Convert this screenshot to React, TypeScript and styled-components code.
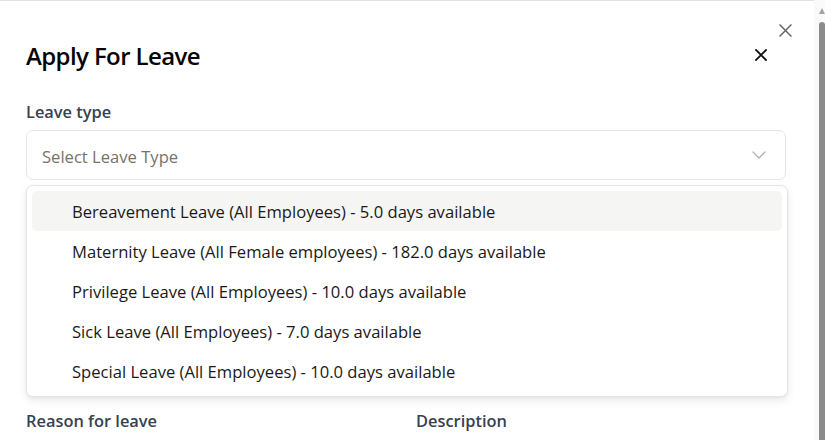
import { ReactElement } from "react";
import styled, { createGlobalStyle } from "styled-components";

const GlobalStyle = createGlobalStyle`
    html, body {
        margin: 0;
        padding: 0;
        background: #ffffff;
        overflow: hidden;
    }
    body {
        font-family: "Open Sans", "Noto Sans", Arial, sans-serif;
        -webkit-font-smoothing: antialiased;
    }
`;

const Screen = styled.div`
    display: flex;
    height: 440px;
    width: 825px;
    overflow: hidden;
`;

const Panel = styled.div`
    position: relative;
    flex: 1;
    border-top: 1px solid #e2e2e2;
    padding: 0 28px 0 26px;
    box-sizing: border-box;
    background: #ffffff;
`;

const ScrollRail = styled.div`
    width: 11px;
    display: flex;
    flex-direction: column;
    align-items: flex-end;
    background: #fafafa;
    padding-top: 8px;
    box-sizing: border-box;
`;

const RailArrow = styled.div`
    width: 0;
    height: 0;
    border-left: 3px solid transparent;
    border-right: 3px solid transparent;
    border-bottom: 6px solid #a3a3a3;
`;

const RailThumb = styled.div`
    margin-top: 8px;
    width: 6px;
    flex: 1;
    background: #8b8b8b;
    border-radius: 3px 3px 0 0;
`;

const OuterClose = styled.button`
    position: absolute;
    top: 22px;
    right: 22px;
    width: 14px;
    height: 14px;
    padding: 0;
    border: none;
    background: none;
    color: #666666;
    display: flex;
    align-items: center;
    justify-content: center;
`;

const Header = styled.div`
    display: flex;
    align-items: center;
    justify-content: space-between;
    padding-top: 37px;
    height: 34px;
    padding-right: 18px;
`;

const Title = styled.h2`
    margin: 0;
    font-size: 24px;
    font-weight: 600;
    color: #050505;
    letter-spacing: -0.6px;
`;

const CloseButton = styled.button`
    width: 14px;
    height: 14px;
    padding: 0;
    border: none;
    background: none;
    color: #111111;
    display: flex;
    align-items: center;
    justify-content: center;
`;

const Form = styled.div`
    display: flex;
    flex-direction: column;
    gap: 23px;
    margin-top: 28px;
`;

const Field = styled.div<{ $gap?: number }>`
    position: relative;
    display: flex;
    flex-direction: column;
    gap: ${(p) => p.$gap ?? 6}px;
`;

const Row = styled.div`
    display: grid;
    grid-template-columns: 1fr 1fr;
    gap: 20px;
`;

const Label = styled.label`
    font-size: 16.4px;
    line-height: 24px;
    font-weight: 600;
    color: #374151;
`;

const SelectBox = styled.div`
    height: 50px;
    box-sizing: border-box;
    border: 1px solid #e7e5e4;
    border-radius: 7px;
    display: flex;
    align-items: center;
    justify-content: space-between;
    padding: 0 19px 0 15px;
    background: #ffffff;
`;

const Placeholder = styled.span`
    font-size: 16.6px;
    color: #78716c;
    margin-top: 3px;
`;

const Input = styled.div<{ $height?: number }>`
    height: ${(p) => p.$height ?? 50}px;
    box-sizing: border-box;
    border: 1px solid #e7e5e4;
    border-radius: 7px;
`;

const Menu = styled.div`
    position: absolute;
    top: 85px;
    left: 0;
    right: -2px;
    background: #ffffff;
    border: 1px solid #e7e5e4;
    border-radius: 7px;
    padding: 5px;
    box-shadow: 0 4px 8px rgba(0, 0, 0, 0.08), 0 1px 3px rgba(0, 0, 0, 0.05);
    z-index: 5;
`;

const Option = styled.div<{ $active?: boolean }>`
    height: 40px;
    display: flex;
    align-items: center;
    padding-left: 40px;
    padding-top: 1px;
    box-sizing: border-box;
    border-radius: 5px;
    font-size: 16.6px;
    color: #1c1917;
    background: ${(p) => (p.$active ? "#f5f5f4" : "transparent")};
`;

const XIcon = ({ size, stroke }: { size: number; stroke: number }): ReactElement => (
    <svg width={size} height={size} viewBox="0 0 12 12" fill="none">
        <path d="M1 1L11 11M11 1L1 11" stroke="currentColor" strokeWidth={stroke} strokeLinecap="square" />
    </svg>
);

const Chevron = (): ReactElement => (
    <svg width="14" height="8" viewBox="0 0 14 8" fill="none">
        <path d="M1 1L7 7L13 1" stroke="#b5b3b1" strokeWidth="1.3" strokeLinecap="round" strokeLinejoin="round" />
    </svg>
);

const leaveTypes = [
    "Bereavement Leave (All Employees) - 5.0 days available",
    "Maternity Leave (All Female employees) - 182.0 days available",
    "Privilege Leave (All Employees) - 10.0 days available",
    "Sick Leave (All Employees) - 7.0 days available",
    "Special Leave (All Employees) - 10.0 days available",
];

const App = (): ReactElement => {
    return (
        <>
            <GlobalStyle />
            <Screen>
                <Panel>
                    <OuterClose aria-label="Close dialog">
                        <XIcon size={13} stroke={1.4} />
                    </OuterClose>
                    <Header>
                        <Title>Apply For Leave</Title>
                        <CloseButton aria-label="Close">
                            <XIcon size={12} stroke={1.8} />
                        </CloseButton>
                    </Header>
                    <Form>
                        <Field>
                            <Label>Leave type</Label>
                            <SelectBox>
                                <Placeholder>Select Leave Type</Placeholder>
                                <Chevron />
                            </SelectBox>
                            <Menu>
                                {leaveTypes.map((type, i) => (
                                    <Option key={type} $active={i === 0}>{type}</Option>
                                ))}
                            </Menu>
                        </Field>
                        <Row>
                            <Input $height={80} />
                            <Input $height={80} />
                        </Row>
                        <Row>
                            <Input $height={80} />
                            <Input $height={80} />
                        </Row>
                        <Row>
                            <Field $gap={10}>
                                <Label>Reason for leave</Label>
                                <Input $height={90} />
                            </Field>
                            <Field $gap={10}>
                                <Label>Description</Label>
                                <Input $height={90} />
                            </Field>
                        </Row>
                    </Form>
                </Panel>
                <ScrollRail>
                    <RailArrow />
                    <RailThumb />
                </ScrollRail>
            </Screen>
        </>
    );
};

export default App;
